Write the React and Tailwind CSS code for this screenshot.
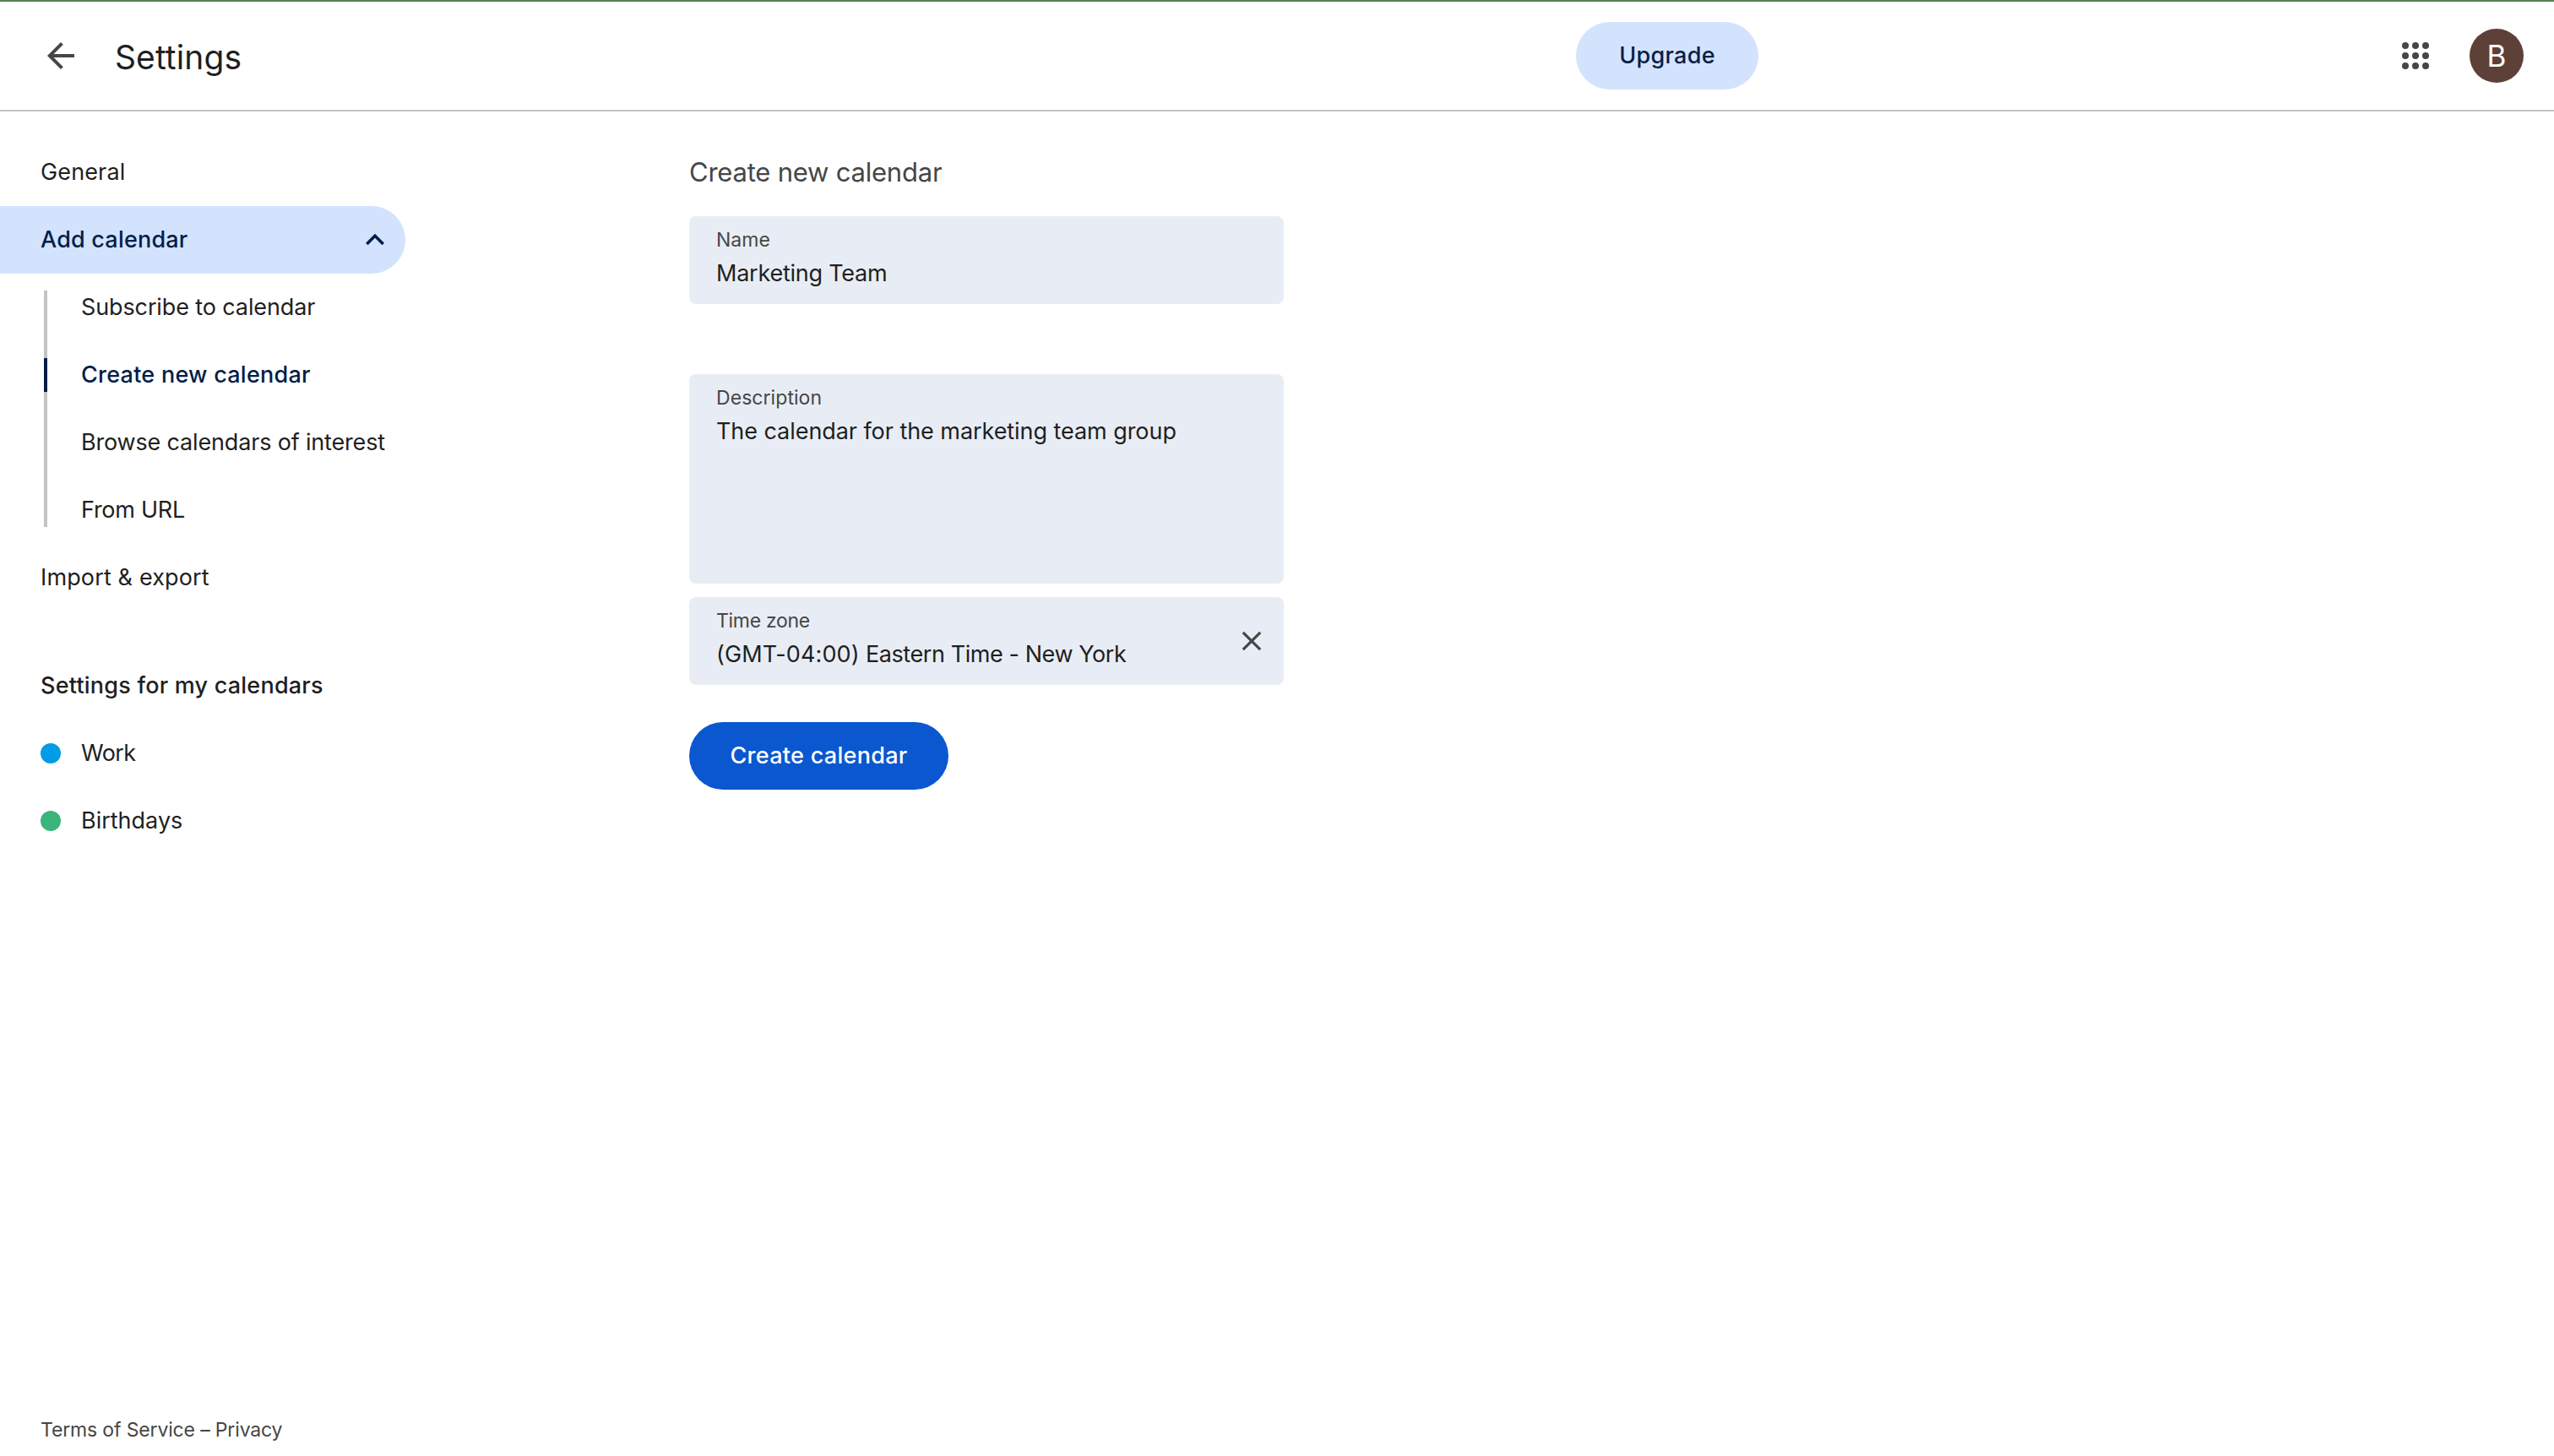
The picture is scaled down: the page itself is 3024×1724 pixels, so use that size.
import React from 'react';

function BackArrow() {
  return (
    <svg className="size-12" viewBox="0 0 24 24" fill="#444746">
      <path d="M20 11H7.83l5.59-5.59L12 4l-8 8 8 8 1.41-1.41L7.83 13H20v-2z" />
    </svg>
  );
}

function ChevronUp() {
  return (
    <svg className="size-11" viewBox="0 0 24 24" fill="#041e49">
      <path d="M12 8l-6 6 1.41 1.41L12 10.83l4.59 4.58L18 14z" />
    </svg>
  );
}

function AppsGrid() {
  return (
    <svg className="size-12" viewBox="0 0 48 48" fill="#444746">
      {[12, 24, 36].map((y) =>
        [12, 24, 36].map((x) => <circle key={`${x}-${y}`} cx={x} cy={y} r="4" />)
      )}
    </svg>
  );
}

function CloseIcon() {
  return (
    <svg className="size-6" viewBox="0 0 24 24" stroke="#444746" strokeWidth="3.2" fill="none">
      <path d="M1.8 1.8l20.4 20.4M22.2 1.8L1.8 22.2" />
    </svg>
  );
}

const subItems = [
  { label: 'Subscribe to calendar', spacing: 'tracking-[-0.12px]' },
  { label: 'Create new calendar', spacing: 'tracking-[0.25px]', active: true },
  { label: 'Browse calendars of interest', spacing: 'tracking-[-0.17px]' },
  { label: 'From URL', spacing: 'tracking-[-0.26px]' },
];

const calendars = [
  { label: 'Work', color: 'bg-[#039be5]', spacing: 'tracking-[-0.6px]' },
  { label: 'Birthdays', color: 'bg-[#3ab57c]', spacing: 'tracking-[0px]' },
];

function Header() {
  return (
    <header className="flex h-[132px] items-center border-t-2 border-b-2 border-t-[#568053] border-b-[#c4c4c4] pl-12 pr-9">
      <button aria-label="Back"><BackArrow /></button>
      <h1 className="ml-10 pt-[3px] text-[39px] leading-[52px] tracking-[0.1px]">Settings</h1>
      <button className="ml-auto h-20 w-[216px] rounded-full bg-[#d3e3fd] font-medium tracking-[0.28px] text-[#041e49]">
        Upgrade
      </button>
      <button className="ml-[754px]" aria-label="Apps"><AppsGrid /></button>
      <div className="ml-10 flex size-16 items-center justify-center rounded-full bg-[#5d4037] text-[35px] text-white">
        B
      </div>
    </header>
  );
}

function Sidebar() {
  return (
    <nav className="flex w-[816px] flex-col pt-8">
      <div className="flex h-20 items-center pl-12 tracking-[0.13px]">General</div>
      <div className="flex h-20 w-[480px] items-center justify-between rounded-r-full bg-[#d3e3fd] pl-12 pr-[14px] font-medium text-[#041e49]">
        <span className="tracking-[0.2px]">Add calendar</span>
        <ChevronUp />
      </div>
      <div className="flex pl-[52px]">
        <div className="my-5 flex w-1 flex-col bg-[#c4c4c4] pt-20">
          <div className="h-10 bg-[#001d47]" />
        </div>
        <ul className="pl-10">
          {subItems.map((s) => (
            <li
              key={s.label}
              className={`flex h-20 items-center whitespace-nowrap ${s.spacing} ${s.active ? 'font-medium text-[#041e49]' : ''}`}
            >
              {s.label}
            </li>
          ))}
        </ul>
      </div>
      <div className="flex h-20 items-center pl-12 tracking-[0.14px]">Import &amp; export</div>
      <h2 className="mt-12 flex h-20 items-center pl-12 font-medium tracking-[0.22px]">
        Settings for my calendars
      </h2>
      {calendars.map((c) => (
        <div key={c.label} className="flex h-20 items-center gap-6 pl-12">
          <span className={`size-6 rounded-full ${c.color}`} />
          <span className={c.spacing}>{c.label}</span>
        </div>
      ))}
      <footer className="mt-auto pb-[15px] pl-12 text-[23px] leading-8 tracking-[-0.15px] text-[#444746]">
        Terms of Service – Privacy
      </footer>
    </nav>
  );
}

function Field({ label, labelSpacing, value, valueSpacing, className, children }) {
  return (
    <div className={`flex w-[704px] justify-between rounded-lg bg-[#e8edf5] pl-8 pt-3 pr-[26px] ${className}`}>
      <div>
        <div className={`text-[23px] leading-8 text-[#444746] ${labelSpacing}`}>{label}</div>
        <div className={`mt-1 leading-10 ${valueSpacing}`}>{value}</div>
      </div>
      {children}
    </div>
  );
}

export default function App() {
  return (
    <div className="flex h-[1724px] w-[3024px] flex-col overflow-hidden bg-white font-['Inter',sans-serif] text-[27px] leading-10 text-[#1f1f1f]">
      <Header />
      <div className="flex flex-1">
        <Sidebar />
        <main className="pt-[52px]">
          <h2 className="mb-8 text-[31px] leading-10 tracking-[-0.22px] text-[#444746]">Create new calendar</h2>
          <Field
            label="Name"
            labelSpacing="tracking-[0px]"
            value="Marketing Team"
            valueSpacing="tracking-[-0.24px]"
            className="h-[104px]"
          />
          <Field
            label="Description"
            labelSpacing="tracking-[0.06px]"
            value="The calendar for the marketing team group"
            valueSpacing="tracking-[-0.06px]"
            className="mt-[83px] h-[248px]"
          />
          <Field
            label="Time zone"
            labelSpacing="tracking-[-0.3px]"
            value={<><span className="tracking-[0.12px]">(GMT-04:00)</span> Eastern Time - New York</>}
            valueSpacing="tracking-[-0.42px]"
            className="mt-4 h-[104px]"
          >
            <button className="mt-7 h-6" aria-label="Clear"><CloseIcon /></button>
          </Field>
          <button className="mt-11 h-20 w-[307px] rounded-full bg-[#0b57d0] font-medium tracking-[0.29px] text-white">
            Create calendar
          </button>
        </main>
      </div>
    </div>
  );
}
